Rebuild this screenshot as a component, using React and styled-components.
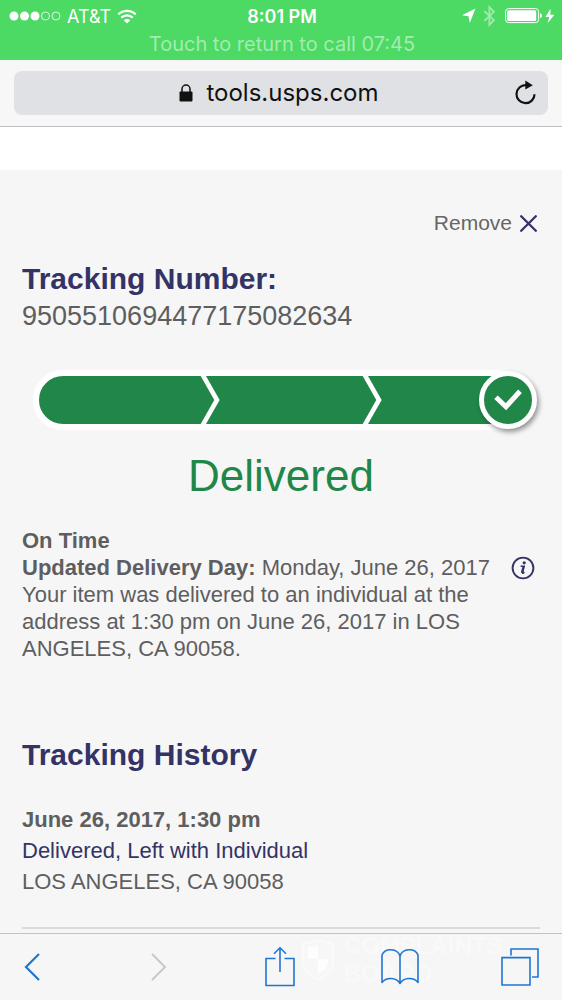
import styled, { createGlobalStyle } from "styled-components";

const GlobalStyle = createGlobalStyle`
  * {
    box-sizing: border-box;
  }
  body {
    margin: 0;
    background: #f6f6f6;
    color: #5e5e60;
    font-family: "Liberation Sans", Arial, sans-serif;
  }
  h1, h2, p {
    margin: 0;
  }
  button {
    border: none;
    background: none;
    padding: 0;
    font-family: inherit;
    cursor: pointer;
  }
  svg {
    display: block;
    flex-shrink: 0;
  }
`;

const Page = styled.div`
  min-height: 100vh;
  display: flex;
  flex-direction: column;
`;

const StatusBar = styled.header`
  height: 60px;
  padding: 2px 7px 0 9px;
  background: #4cd964;
  color: #fff;
  font-family: Inter, "Liberation Sans", sans-serif;
`;

const StatusRow = styled.div`
  display: grid;
  grid-template-columns: 1fr auto 1fr;
  align-items: center;
  height: 28px;
`;

const StatusGroup = styled.div`
  display: flex;
  align-items: center;
  justify-content: ${(props) => (props.$end ? "flex-end" : "flex-start")};
  gap: ${(props) => (props.$end ? "8px" : "6px")};
  font-size: 18px;
`;

const Clock = styled.span`
  font-size: 18px;
  font-weight: 600;
`;

const CallButton = styled.button`
  display: block;
  width: 100%;
  color: #a3ecb0;
  font-size: 20px;
  line-height: 29px;
`;

const AddressBar = styled.div`
  padding: 11px 14px;
  background: #f7f7f8;
  border-bottom: 1px solid #c0c0c2;
`;

const AddressField = styled.div`
  display: flex;
  align-items: center;
  height: 44px;
  padding: 0 11px;
  border-radius: 8px;
  background: #e0e1e4;
  color: #111;
`;

const Host = styled.span`
  flex: 1;
  display: flex;
  align-items: center;
  justify-content: center;
  gap: 13px;
  padding-left: 20px;
  font-family: Inter, "Liberation Sans", sans-serif;
  font-size: 24px;
  line-height: 28px;
`;

const Spacer = styled.div`
  height: 43px;
  background: #fff;
`;

const Main = styled.main`
  flex: 1;
  padding: 38px 22px 4px;
`;

const RemoveButton = styled.button`
  display: flex;
  align-items: center;
  gap: 8px;
  margin-left: auto;
  padding-right: 3px;
  color: #666;
  font-size: 21px;
  line-height: 30px;
`;

const Heading = styled.h2`
  color: #333366;
  font-size: 30px;
  line-height: 36px;
`;

const NumberSection = styled.section`
  margin-top: 23px;
`;

const TrackingCode = styled.p`
  font-size: 27px;
  line-height: 38px;
`;

const Progress = styled.div`
  position: relative;
  margin: 35px 3px 0 11px;
`;

const ProgressBar = styled.div`
  display: flex;
  height: 60px;
  margin-right: 8px;
  border: 6px solid #fff;
  border-radius: 30px;
  background: #218748;
  overflow: hidden;
`;

const Step = styled.div`
  flex: ${(props) => props.$grow};
  display: flex;
  justify-content: flex-end;
`;

const DoneBadge = styled.div`
  position: absolute;
  top: 1px;
  right: 0;
  display: flex;
  align-items: center;
  justify-content: center;
  width: 58px;
  height: 58px;
  border: 5px solid #fff;
  border-radius: 50%;
  background: #218748;
  box-shadow: 2px 3px 5px rgba(0, 0, 0, 0.4);
`;

const Status = styled.h1`
  margin-top: 21px;
  color: #218748;
  font-size: 44px;
  font-weight: normal;
  line-height: 50px;
  text-align: center;
`;

const Details = styled.section`
  margin-top: 26px;
  font-size: 22px;
  line-height: 27px;
`;

const DeliveryDay = styled.p`
  display: flex;
  align-items: center;
  justify-content: space-between;
  padding-right: 5px;
`;

const Message = styled.p`
  max-width: 480px;
`;

const History = styled.section`
  margin-top: 75px;
  padding-bottom: 30px;
  border-bottom: 2px solid #dadada;
`;

const HistoryEntry = styled.div`
  margin-top: 31px;
  font-size: 22px;
  line-height: 31px;
`;

const EventLink = styled.a`
  display: block;
  color: #333366;
  text-decoration: none;
`;

const Toolbar = styled.nav`
  position: relative;
  display: flex;
  align-items: center;
  justify-content: space-between;
  height: 67px;
  padding: 0 23px 0 20px;
  border-top: 1px solid #c2c2c4;
  background: #f6f6f6;
`;

const ToolButton = styled.button`
  position: relative;
  display: flex;
  justify-content: ${(props) => (props.$start ? "flex-start" : "center")};
  width: 38px;
  color: #1f76d2;

  &:disabled {
    color: #c8c8ca;
  }
`;

const Watermark = styled.div`
  position: absolute;
  top: -2px;
  left: 301px;
  display: flex;
  align-items: center;
  gap: 9px;
  color: #f9f9f9;
  font-size: 24px;
  font-weight: bold;
  line-height: 28px;
`;

const WatermarkLine = styled.span`
  display: block;
`;

function SignalDots() {
  return (
    <svg width="52" height="12" viewBox="0 0 52 12" aria-hidden="true">
      {[5, 15.5, 26, 36.5, 47].map((cx, i) => (
        <circle
          key={cx}
          cx={cx}
          cy="6"
          r={i < 3 ? 4.5 : 4}
          fill={i < 3 ? "#fff" : "none"}
          stroke={i < 3 ? "none" : "#fff"}
          strokeWidth="0.8"
        />
      ))}
    </svg>
  );
}

function WifiIcon() {
  return (
    <svg width="20" height="15" viewBox="0 0 20 15" fill="none" stroke="#fff" strokeWidth="2.2" aria-hidden="true">
      <path d="M1.3 5.4a12.4 12.4 0 0 1 17.4 0M4.3 8.6a8.2 8.2 0 0 1 11.4 0" />
      <path d="M10 14.4l-3.3-3.2a4.8 4.8 0 0 1 6.6 0z" fill="#fff" stroke="none" />
    </svg>
  );
}

function StatusIcons() {
  return (
    <svg width="94" height="22" viewBox="0 0 94 22" aria-hidden="true">
      <path d="M14.500 3.500L1 10.300l6.500 1 1.300 6.700z" fill="#fff" />
      <path
        d="M23.400 6.200l9.500 9-4.500 4.600V2.200l4.500 4.600-9.500 9"
        fill="none"
        stroke="#a0ecae"
        strokeWidth="1.8"
      />
      <rect x="44.6" y="3.6" width="33" height="14" rx="3" fill="none" stroke="#fff" strokeWidth="1" />
      <rect x="46.2" y="5.2" width="29" height="10.8" rx="1.5" fill="#fff" />
      <path d="M79 8.2c2.6.6 2.6 4.2 0 4.8z" fill="#fff" />
      <path d="M89.500 3.800L84.400 12h3.800l-1.600 6.200 6.800-8.500h-4z" fill="#fff" />
    </svg>
  );
}

function LockIcon() {
  return (
    <svg width="14" height="18" viewBox="0 0 14 18" aria-hidden="true">
      <rect x="0.5" y="7.5" width="13" height="10" rx="1" fill="#111" />
      <path d="M3 8V5a4 4 0 0 1 8 0v3" fill="none" stroke="#111" strokeWidth="1.5" />
    </svg>
  );
}

function ReloadIcon() {
  return (
    <svg width="24" height="26" viewBox="0 0 24 26" aria-hidden="true">
      <path d="M13 5.2a9 9 0 1 0 8.5 9" fill="none" stroke="#111" strokeWidth="2.2" />
      <path d="M12.300.6l7.500 4.600-7.500 4.400z" fill="#111" />
    </svg>
  );
}

function CloseIcon() {
  return (
    <svg width="17" height="17" viewBox="0 0 17 17" fill="none" stroke="#333366" strokeWidth="2.3" strokeLinecap="round" aria-hidden="true">
      <path d="M1.200 1.200l14.600 14.600M15.800 1.200L1.200 15.800" />
    </svg>
  );
}

function StepDivider() {
  return (
    <svg width="20" height="48" viewBox="0 0 20 48" fill="none" stroke="#fff" strokeWidth="4.6" aria-hidden="true">
      <path d="M2.200 -2L17 24 2.200 50" />
    </svg>
  );
}

function CheckIcon() {
  return (
    <svg width="30" height="24" viewBox="0 0 30 24" fill="none" stroke="#fff" strokeWidth="5" aria-hidden="true">
      <path d="M3 9.300l10 9.400L27 3.300" />
    </svg>
  );
}

function InfoIcon() {
  return (
    <svg width="24" height="24" viewBox="0 0 24 24" aria-hidden="true">
      <circle cx="12" cy="12" r="10.4" fill="none" stroke="#333366" strokeWidth="1.9" />
      <circle cx="13.2" cy="6.8" r="1.6" fill="#333366" />
      <path d="M9.600 10.300h3.600l-1.700 6.500c-.2.8.7.5 1.900-.7" fill="none" stroke="#333366" strokeWidth="1.5" />
      <path d="M12.600 10.200l-1.800 6.600" stroke="#333366" strokeWidth="2" />
    </svg>
  );
}

function BackIcon() {
  return (
    <svg width="24" height="28" viewBox="0 0 24 28" fill="none" stroke="currentColor" strokeWidth="2.2" aria-hidden="true">
      <path d="M19 1L6 14l13 13" />
    </svg>
  );
}

function ForwardIcon() {
  return (
    <svg width="18" height="28" viewBox="0 0 18 28" fill="none" stroke="currentColor" strokeWidth="2" aria-hidden="true">
      <path d="M2 1l13 13L2 27" />
    </svg>
  );
}

function ShareIcon() {
  return (
    <svg width="30" height="42" viewBox="0 0 30 42" fill="none" stroke="currentColor" strokeWidth="1.6" aria-hidden="true">
      <path d="M10.500 12.500H1v27h28v-27h-9.500M15 26V1.800M9 7.800l6-6 6 6" />
    </svg>
  );
}

function BookIcon() {
  return (
    <svg width="38" height="38" viewBox="0 0 38 38" fill="none" stroke="currentColor" strokeWidth="1.6" strokeLinejoin="round" aria-hidden="true">
      <path d="M19 8C16.500.2 4-.6 1 7v27.500c4-5.500 14.500-5.500 18 1V8C21.500.2 34-.6 37 7v27.500c-4-5.500-14.500-5.500-18 1" />
    </svg>
  );
}

function TabsIcon() {
  return (
    <svg width="38" height="38" viewBox="0 0 38 38" fill="none" stroke="currentColor" strokeWidth="1.6" aria-hidden="true">
      <path d="M1 9.600h28v27.400H1z" />
      <path d="M10 7.500V1h27v28h-6" />
    </svg>
  );
}

function ShieldIcon() {
  return (
    <svg width="34" height="44" viewBox="0 0 34 44" aria-hidden="true">
      <path
        d="M17 2c5 2 10 3 15 3v19c0 9-7 14-15 18C9 38 2 33 2 24V5c5 0 10-1 15-3z"
        fill="#f7f7f7"
        stroke="#fafafa"
        strokeWidth="2"
      />
      <path d="M7 9c4 0 7-1 10-2v14H7zM17 21h10c1 8-4 12-10 15z" fill="#fdfdfd" />
    </svg>
  );
}

export default function App() {
  return (
    <Page>
      <GlobalStyle />
      <StatusBar>
        <StatusRow>
          <StatusGroup>
            <SignalDots />
            <span>AT&amp;T</span>
            <WifiIcon />
          </StatusGroup>
          <Clock>8:01 PM</Clock>
          <StatusGroup $end>
            <StatusIcons />
          </StatusGroup>
        </StatusRow>
        <CallButton>Touch to return to call 07:45</CallButton>
      </StatusBar>

      <AddressBar>
        <AddressField>
          <Host>
            <LockIcon />
            tools.usps.com
          </Host>
          <button aria-label="Reload">
            <ReloadIcon />
          </button>
        </AddressField>
      </AddressBar>
      <Spacer />

      <Main>
        <RemoveButton>
          Remove
          <CloseIcon />
        </RemoveButton>

        <NumberSection>
          <Heading>Tracking Number:</Heading>
          <TrackingCode>9505510694477175082634</TrackingCode>
        </NumberSection>

        <Progress>
          <ProgressBar>
            <Step $grow={181}>
              <StepDivider />
            </Step>
            <Step $grow={162}>
              <StepDivider />
            </Step>
            <Step $grow={141} />
          </ProgressBar>
          <DoneBadge>
            <CheckIcon />
          </DoneBadge>
        </Progress>
        <Status>Delivered</Status>

        <Details>
          <p>
            <strong>On Time</strong>
          </p>
          <DeliveryDay>
            <span>
              <strong>Updated Delivery Day:</strong> Monday, June 26, 2017
            </span>
            <button aria-label="Delivery day information">
              <InfoIcon />
            </button>
          </DeliveryDay>
          <Message>
            Your item was delivered to an individual at the address at 1:30 pm on June 26, 2017 in LOS ANGELES, CA 90058.
          </Message>
        </Details>

        <History>
          <Heading>Tracking History</Heading>
          <HistoryEntry>
            <strong>June 26, 2017, 1:30 pm</strong>
            <EventLink href="#history">Delivered, Left with Individual</EventLink>
            <p>LOS ANGELES, CA 90058</p>
          </HistoryEntry>
        </History>
      </Main>

      <Toolbar>
        <Watermark>
          <ShieldIcon />
          <div>
            <WatermarkLine>COMPLAINTS</WatermarkLine>
            <WatermarkLine>BOARD</WatermarkLine>
          </div>
        </Watermark>
        <ToolButton aria-label="Back" $start>
          <BackIcon />
        </ToolButton>
        <ToolButton aria-label="Forward" disabled>
          <ForwardIcon />
        </ToolButton>
        <ToolButton aria-label="Share">
          <ShareIcon />
        </ToolButton>
        <ToolButton aria-label="Bookmarks">
          <BookIcon />
        </ToolButton>
        <ToolButton aria-label="Tabs">
          <TabsIcon />
        </ToolButton>
      </Toolbar>
    </Page>
  );
}
